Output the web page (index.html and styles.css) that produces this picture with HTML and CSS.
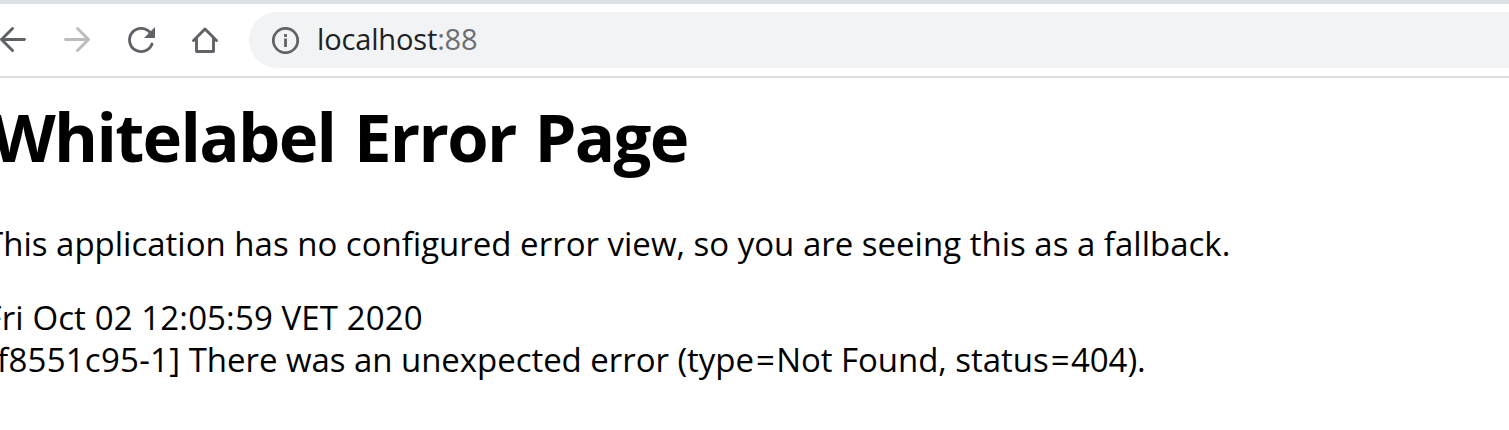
FILE: index.html
```html
<!DOCTYPE html>
<html lang="en">
<head>
<meta charset="utf-8">
<title>localhost:88</title>
<link rel="stylesheet" href="styles.css">
</head>
<body>
<header class="toolbar">
  <nav class="nav">
    <svg class="icon round" viewBox="0 0 32 32"><path d="M28.500 15.500H5.500M16.500 4.500L5.500 15.500l11 11"/></svg>
    <svg class="icon round icon-disabled" viewBox="0 0 32 32"><path d="M5.500 15.500H28.500M17.500 4.500L28.500 15.500 17.500 26.500"/></svg>
    <svg class="icon round" viewBox="0 0 32 32"><path d="M28 20A11.600 11.600 0 1 1 26 8.500"/><path class="solid" d="M31 3v11H20z"/></svg>
    <svg class="icon round" viewBox="0 0 32 32"><path d="M5.500 16.500L17 5l11.500 11.500M8.500 14v13.500h17V14"/></svg>
  </nav>
  <div class="address">
    <svg class="info" viewBox="0 0 28 28"><circle cx="13.500" cy="14.500" r="12.200"/><path d="M13.500 12.500V21M13.500 8v3"/></svg>
    <span class="url"><span class="host">localhost</span><span class="port">:88</span></span>
  </div>
</header>
<main class="page">
  <h1 class="title">Whitelabel Error Page</h1>
  <p class="message">This application has no configured error view, so you are seeing this as a fallback.</p>
  <div class="date">Fri Oct 02 12:05:59 VET 2020</div>
  <div class="error"><span class="request-id">[f8551c95-1]</span> There was an unexpected error (type<span class="equals">=</span>Not Found, status<span class="equals">=</span>404).</div>
</main>
</body>
</html>
```
FILE: styles.css
```css
* { box-sizing: border-box; }
body {
  margin: 0;
  overflow: hidden;
  background: #fff;
  color: #000;
  font-family: "Open Sans", "Noto Sans", sans-serif;
}
.toolbar {
  display: flex;
  height: 78px;
  padding-top: 8px;
  border-top: 4px solid #dee1e6;
  border-bottom: 2px solid #dadce0;
}
.nav {
  display: flex;
  gap: 32px;
  width: 249px;
  padding-top: 12px;
  margin-left: -4px;
  flex: none;
}
.icon {
  width: 32px;
  height: 32px;
  flex: none;
  fill: none;
  stroke: #5f6368;
  stroke-width: 2.9;
}
.round { stroke-linecap: round; stroke-linejoin: round; }
.icon-disabled { stroke: #babcbe; }
.icon .solid { fill: #5f6368; stroke: none; }
.address {
  display: flex;
  align-items: center;
  flex: 1;
  height: 56px;
  margin-left: 4px;
  padding-left: 23px;
  border-radius: 28px 0 0 28px;
  background: #f1f3f4;
}
.info {
  width: 28px;
  height: 28px;
  fill: none;
  stroke: #5f6368;
  stroke-width: 2.8;
}
.url {
  margin-left: 17px;
  font-size: 29px;
  letter-spacing: -0.15px;
  line-height: 54px;
  height: 56px;
  white-space: nowrap;
}
.host { color: #202124; }
.port { color: #6b6f73; }
.page { white-space: nowrap; }
.title {
  margin: 13px 0 0 -9px;
  font-size: 67px;
  letter-spacing: -1.7px;
  word-spacing: 3px;
  line-height: 90px;
  font-weight: 700;
}
.message {
  margin: 42px 0 0 -15px;
  font-size: 33px;
  line-height: 42px;
}
.date {
  margin: 32px 0 0 -15.5px;
  font-size: 33px;
  letter-spacing: 0.12px;
  line-height: 42px;
}
.error {
  margin-left: -14px;
  font-size: 33px;
  letter-spacing: -0.05px;
  line-height: 42px;
}
.request-id { letter-spacing: 0.25px; }
.equals { margin: 0 1.5px 0 2px; }
```
